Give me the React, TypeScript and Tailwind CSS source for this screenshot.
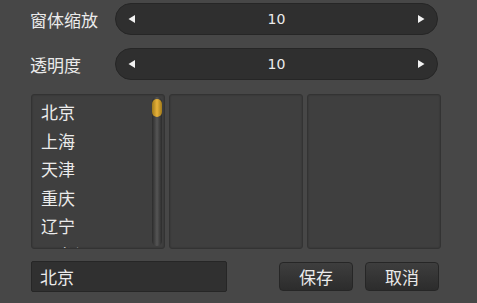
import React from 'react';

const cities = ['北京', '上海', '天津', '重庆', '辽宁', '黑龙江'];

const Slider = ({ value }: { value: number }) => (
  <div className="flex h-[32px] w-[323px] items-center justify-between rounded-full border border-[#262626] bg-[#2f2f2f] px-[11px]">
    <svg width="10" height="10" viewBox="0 0 10 10">
      <path d="M8 1 L1.5 5 L8 9 Z" fill="#f2f2f2" />
    </svg>
    <span className="font-['DejaVu_Sans',sans-serif] text-[14px] text-[#ececec]">{value}</span>
    <svg width="10" height="10" viewBox="0 0 10 10">
      <path d="M2 1 L8.5 5 L2 9 Z" fill="#f2f2f2" />
    </svg>
  </div>
);

const Panel = ({ children }: { children?: React.ReactNode }) => (
  <div className="relative h-[155px] w-[134px] overflow-hidden rounded-[3px] border border-[#333333] bg-[#3f3f3f] shadow-[inset_0_0_2px_rgba(0,0,0,0.25)]">
    {children}
  </div>
);

const App = () => {
  return (
    <div className="h-[303px] w-[477px] bg-[#474747] pl-[30px] pt-[3px] font-['Noto_Sans_CJK_SC',sans-serif] text-[#ebebeb]">
      <div className="flex flex-col gap-[13px]">
        <div className="flex items-center">
          <span className="w-[85px] text-[17px] leading-none">窗体缩放</span>
          <Slider value={10} />
        </div>
        <div className="flex items-center">
          <span className="w-[85px] text-[17px] leading-none">透明度</span>
          <Slider value={10} />
        </div>
      </div>

      <div className="mt-[14px] flex gap-[4px] pl-[1px]">
        <Panel>
          <div className="flex flex-col pl-[9px] pt-[3px]">
            {cities.map((c) => (
              <div key={c} className="h-[28.5px] text-[17px] leading-[28px]">
                {c}
              </div>
            ))}
          </div>
          <div className="absolute right-[2px] top-[2px] bottom-[2px] w-[10px] rounded-full bg-gradient-to-r from-[#2c2c2c] via-[#555555] to-[#2c2c2c]">
            <div className="mt-[2px] h-[18px] w-[10px] rounded-full bg-gradient-to-r from-[#a07a1a] via-[#e8b23a] to-[#a07a1a]" />
          </div>
        </Panel>
        <Panel />
        <Panel />
      </div>

      <div className="mt-[12px] flex items-center pl-[1px]">
        <div className="flex h-[31px] w-[196px] items-center rounded-[2px] border border-[#262626] bg-[#303030] pl-[8px] text-[17px]">
          北京
        </div>
        <button className="ml-[52px] flex h-[29px] w-[74px] items-center justify-center rounded-[4px] border border-[#262626] bg-gradient-to-b from-[#3e3e3e] to-[#2c2c2c] text-[17px] text-[#ebebeb]">
          保存
        </button>
        <button className="ml-[12px] flex h-[29px] w-[74px] items-center justify-center rounded-[4px] border border-[#262626] bg-gradient-to-b from-[#3e3e3e] to-[#2c2c2c] text-[17px] text-[#ebebeb]">
          取消
        </button>
      </div>
    </div>
  );
};

export default App;
